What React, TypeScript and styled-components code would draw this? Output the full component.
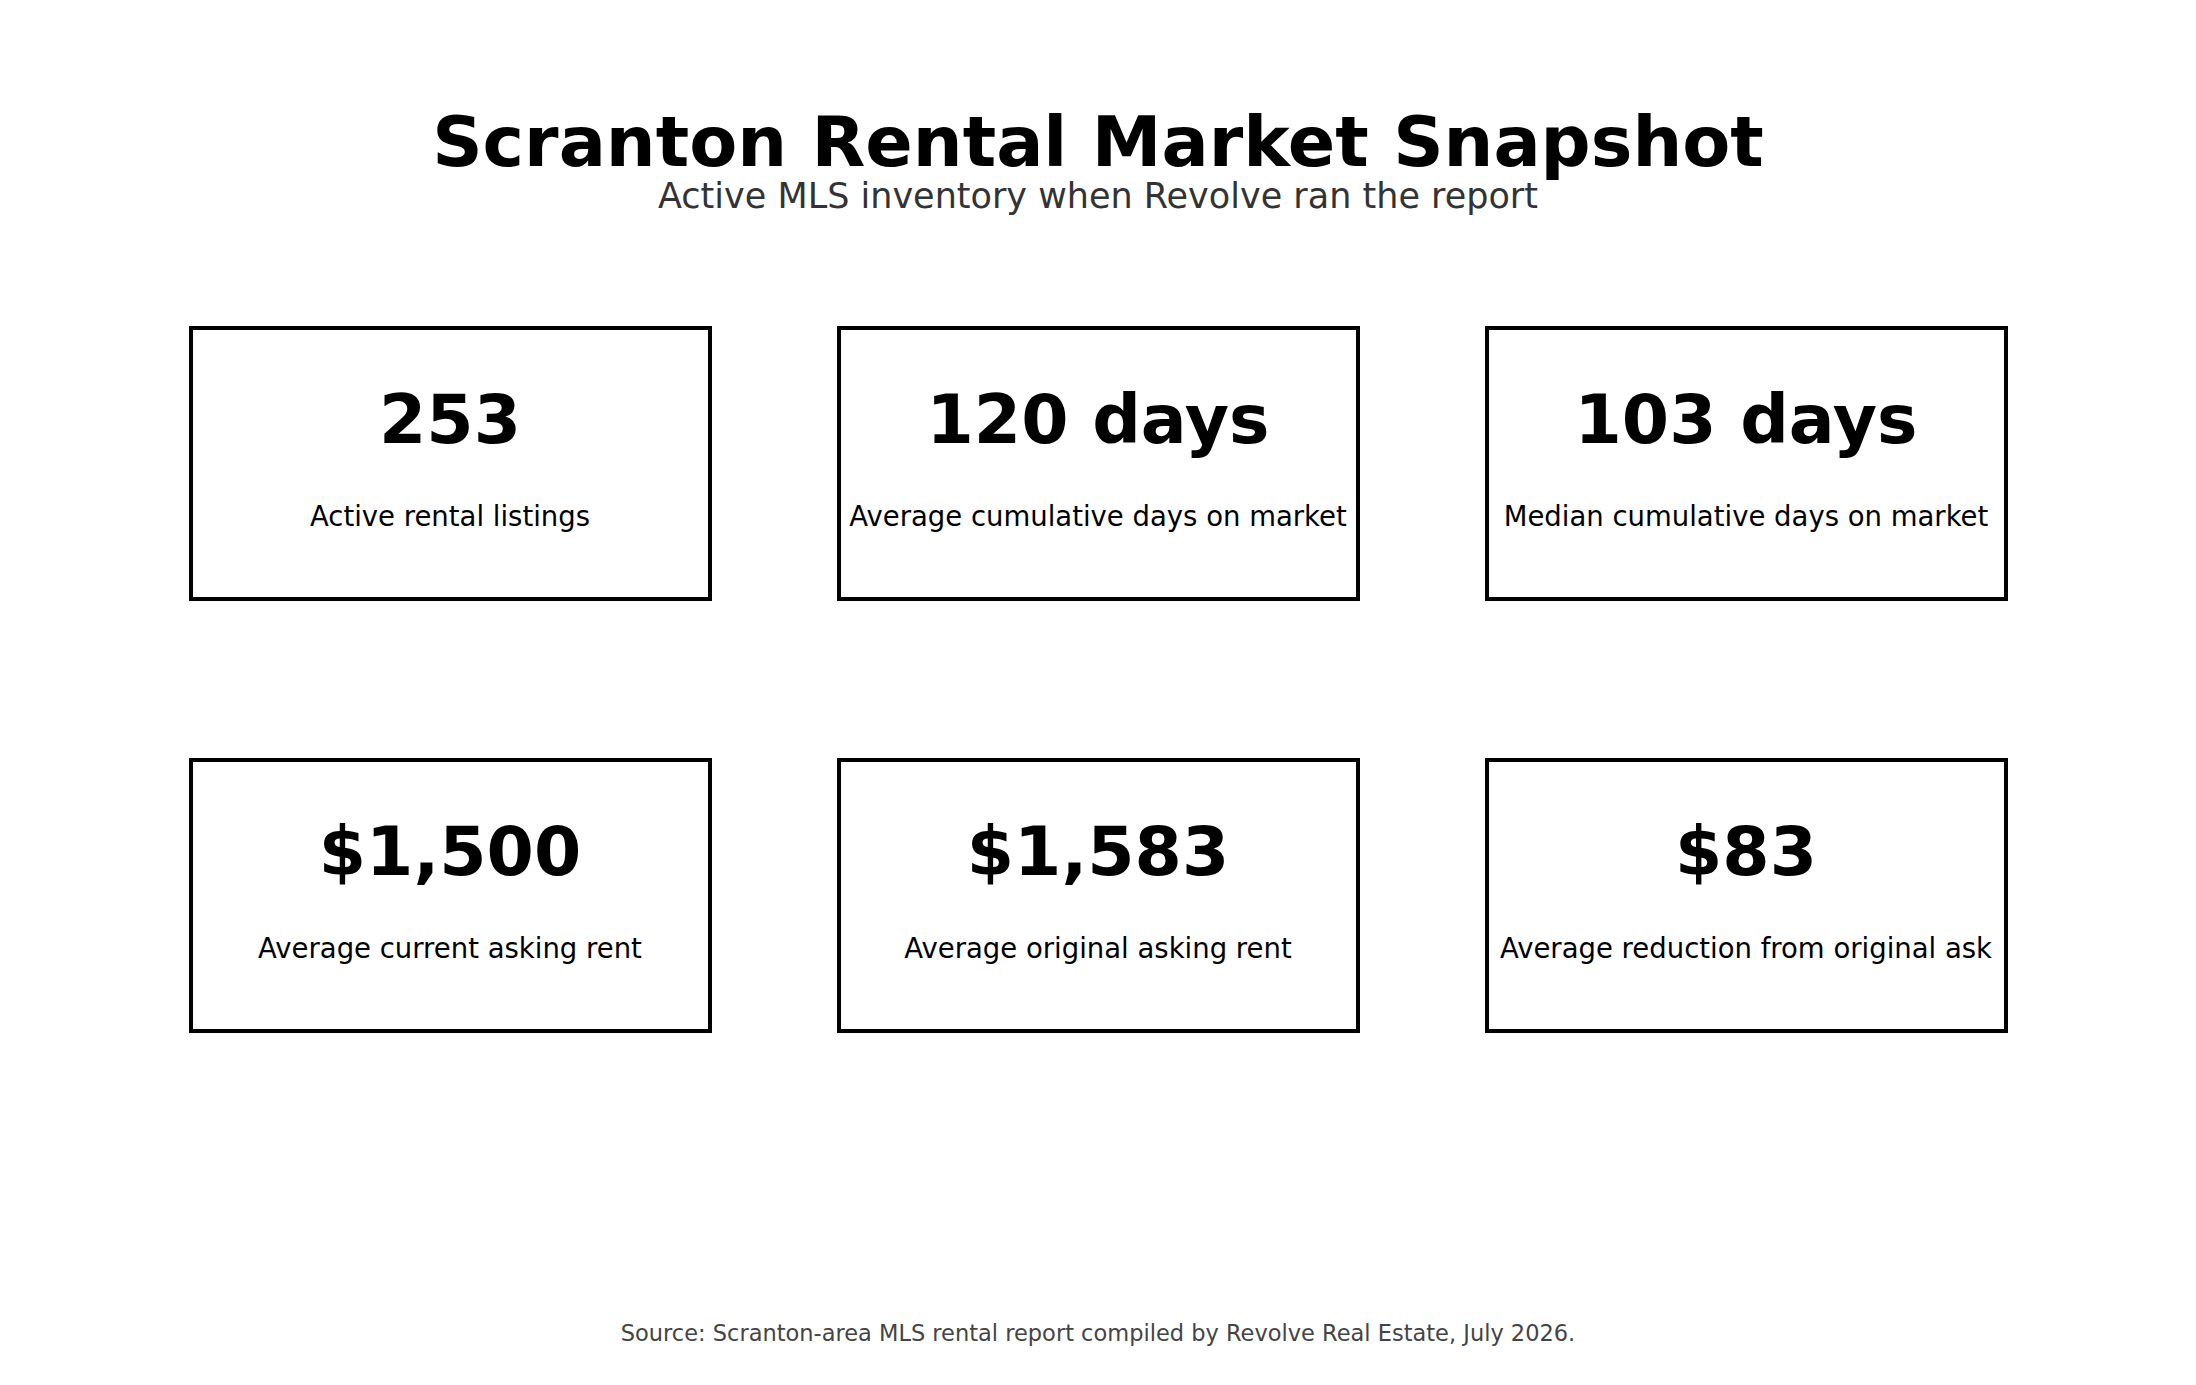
import styled, { createGlobalStyle } from 'styled-components';

const stats = [
  { value: '253', label: 'Active rental listings' },
  { value: '120 days', label: 'Average cumulative days on market' },
  { value: '103 days', label: 'Median cumulative days on market' },
  { value: '$1,500', label: 'Average current asking rent' },
  { value: '$1,583', label: 'Average original asking rent' },
  { value: '$83', label: 'Average reduction from original ask' },
];

const GlobalStyle = createGlobalStyle`
  html, body {
    margin: 0;
    padding: 0;
    background: #ffffff;
  }
  body {
    font-family: "DejaVu Sans", "Liberation Sans", sans-serif;
    color: #000000;
  }
`;

const Page = styled.main`
  width: 2196px;
  min-height: 1385px;
  box-sizing: border-box;
  padding-top: 107px;
  display: flex;
  flex-direction: column;
  align-items: center;
`;

const Title = styled.h1`
  margin: 0;
  font-size: 70px;
  line-height: 70px;
  font-weight: bold;
  color: #000;
`;

const Subtitle = styled.p`
  margin: 1px 0 0;
  font-size: 35px;
  line-height: 36px;
  color: #333333;
`;

const Grid = styled.section`
  margin-top: 112px;
  display: grid;
  grid-template-columns: repeat(3, 523px);
  column-gap: 125px;
  row-gap: 157px;
`;

const Card = styled.div`
  box-sizing: border-box;
  height: 275px;
  border: 4px solid #000;
  padding-top: 56px;
  display: flex;
  flex-direction: column;
  align-items: center;
  text-align: center;
`;

const Value = styled.div`
  font-size: 68px;
  line-height: 68px;
  font-weight: bold;
`;

const Label = styled.div`
  margin-top: 48px;
  font-size: 27.5px;
  line-height: 28px;
  white-space: nowrap;
`;

const Footer = styled.footer`
  margin-top: 289px;
  font-size: 22.5px;
  line-height: 23px;
  color: #444444;
`;

export default function App() {
  return (
    <>
      <GlobalStyle />
      <Page>
        <Title>Scranton Rental Market Snapshot</Title>
        <Subtitle>Active MLS inventory when Revolve ran the report</Subtitle>
        <Grid>
          {stats.map((s) => (
            <Card key={s.label}>
              <Value>{s.value}</Value>
              <Label>{s.label}</Label>
            </Card>
          ))}
        </Grid>
        <Footer>Source: Scranton-area MLS rental report compiled by Revolve Real Estate, July 2026.</Footer>
      </Page>
    </>
  );
}
